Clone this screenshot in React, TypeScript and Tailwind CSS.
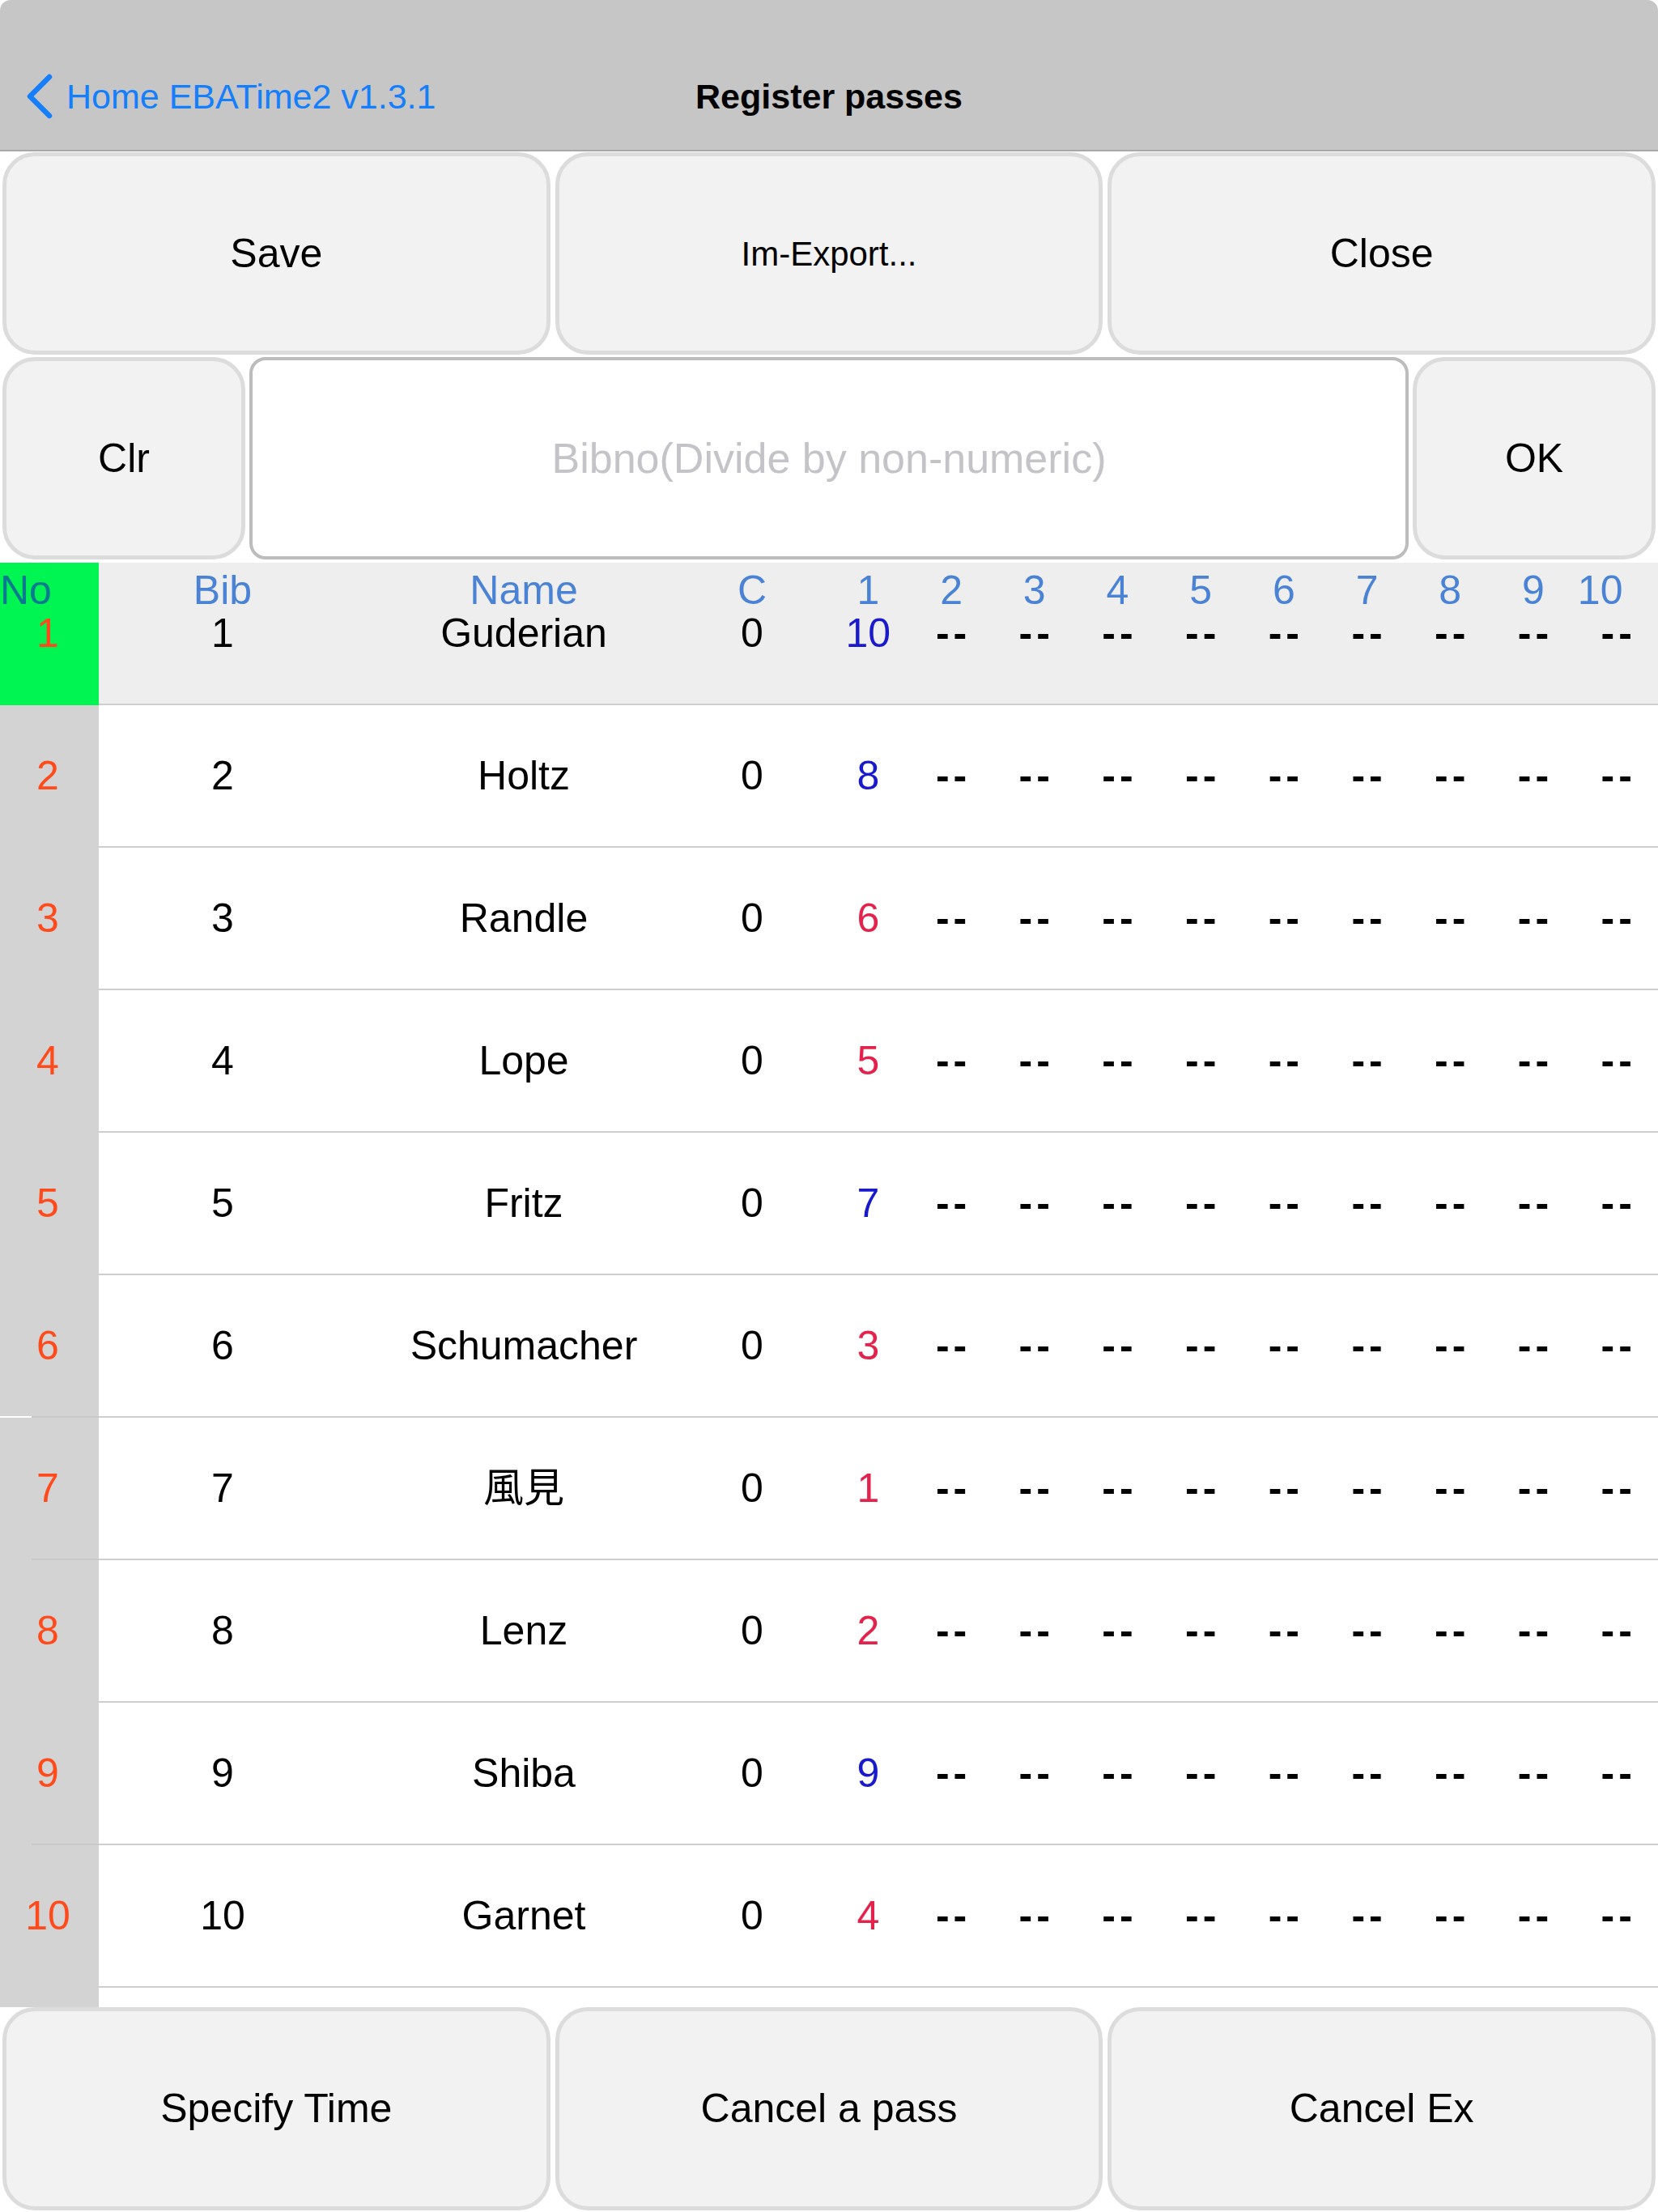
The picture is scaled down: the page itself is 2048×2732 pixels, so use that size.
import React from 'react';

type Sep = 'short' | 'long' | 'cut';
type Entry = { no: number; bib: number; name: string; c: number; pass: number; tone: 'blue' | 'red'; sep?: Sep };

const entries: Entry[] = [
  { no: 1, bib: 1, name: 'Guderian', c: 0, pass: 10, tone: 'blue' },
  { no: 2, bib: 2, name: 'Holtz', c: 0, pass: 8, tone: 'blue' },
  { no: 3, bib: 3, name: 'Randle', c: 0, pass: 6, tone: 'red' },
  { no: 4, bib: 4, name: 'Lope', c: 0, pass: 5, tone: 'red' },
  { no: 5, bib: 5, name: 'Fritz', c: 0, pass: 7, tone: 'blue' },
  { no: 6, bib: 6, name: 'Schumacher', c: 0, pass: 3, tone: 'red', sep: 'cut' },
  { no: 7, bib: 7, name: '風見', c: 0, pass: 1, tone: 'red', sep: 'long' },
  { no: 8, bib: 8, name: 'Lenz', c: 0, pass: 2, tone: 'red' },
  { no: 9, bib: 9, name: 'Shiba', c: 0, pass: 9, tone: 'blue', sep: 'long' },
  { no: 10, bib: 10, name: 'Garnet', c: 0, pass: 4, tone: 'red' },
];

const laps = [2, 3, 4, 5, 6, 7, 8, 9, 10];

const PadButton: React.FC<{ label: string; small?: boolean; className?: string }> = ({ label, small, className = '' }) => (
  <button
    className={`h-full bg-[#f2f2f2] border-[5px] border-[#dcdcdc] rounded-[40px] flex items-center justify-center text-black ${small ? 'text-[42px]' : 'text-[50px]'} ${className}`}
  >
    {label}
  </button>
);

const Row: React.FC<{ entry: Entry }> = ({ entry }) => {
  const selected = entry.no === 1;
  const sep = entry.sep ?? 'short';
  return (
    <div className="flex h-[176px]">
      <div className={`w-[122px] flex flex-col ${selected ? 'bg-[#00f552]' : 'bg-[#d3d3d3]'}`}>
        <div className="flex-1 flex items-center justify-center text-[#ff4a1c] pr-[4px]">{entry.no}</div>
        {sep === 'short' && <div className="h-[2px]" />}
        {sep !== 'short' && (
          <div className="h-[2px] flex">
            <div className={`w-[39px] ${sep === 'cut' ? 'bg-white' : ''}`} />
            <div className="flex-1 bg-[#c8c7cc]" />
          </div>
        )}
      </div>
      <div
        className={`flex-1 grid grid-cols-[306px_438px_155px_repeat(10,1fr)] items-center border-b-2 border-[#cfcfd3] ${selected ? 'bg-[#eeeeee]' : 'bg-white'}`}
      >
        <div className="text-center">{entry.bib}</div>
        <div className="text-center">{entry.name}</div>
        <div className="text-center pr-[29px]">{entry.c}</div>
        <div className={`text-center ${entry.tone === 'blue' ? 'text-[#1a1acd]' : 'text-[#e3234c]'}`}>{entry.pass}</div>
        {laps.map(l => (
          <div key={l} className="text-center font-bold tracking-[5px] pl-[5px]">--</div>
        ))}
      </div>
    </div>
  );
};

export default function App() {
  return (
    <div className="w-[2048px] h-[2732px] bg-white flex flex-col overflow-hidden font-['Liberation_Sans','Noto_Sans_CJK_JP',sans-serif]">
      {/* nav bar */}
      <div className="h-[187px] shrink-0 bg-[#c6c6c6] border-b-2 border-[#a8a8a8] rounded-t-[13px] flex flex-col justify-end pb-[22px]">
        <div className="h-[88px] grid grid-cols-[1fr_auto_1fr] items-center">
          <div className="flex items-center pl-[31px] gap-[16px] text-[#147efb] text-[43px]">
            <svg width="35" height="56" viewBox="0 0 35 56" fill="none">
              <path d="M30 4 L6 28 L30 52" stroke="#147efb" strokeWidth="6.5" strokeLinecap="round" strokeLinejoin="round" />
            </svg>
            <span>Home EBATime2 v1.3.1</span>
          </div>
          <div className="text-[43px] font-bold text-black">Register passes</div>
          <div />
        </div>
      </div>

      {/* top controls */}
      <div className="shrink-0 h-[250px] mt-[1px] px-[3px] flex gap-[6px]">
        <PadButton label="Save" className="flex-1" />
        <PadButton label="Im-Export..." small className="flex-1" />
        <PadButton label="Close" className="flex-1" />
      </div>
      <div className="shrink-0 h-[250px] mt-[3px] px-[3px] flex gap-[5px]">
        <PadButton label="Clr" className="w-[300px]" />
        <div className="flex-1 h-full bg-white border-[4px] border-[#bcbcbc] rounded-[20px] flex items-center justify-center text-[52px] text-[#c4c4c8]">
          Bibno(Divide by non-numeric)
        </div>
        <PadButton label="OK" className="w-[300px]" />
      </div>

      {/* table */}
      <div className="relative flex-1 min-h-0 mt-[4px] flex flex-col text-[50px] leading-none text-black">
        {entries.map(e => (
          <Row key={e.no} entry={e} />
        ))}
        <div className="flex-1 flex">
          <div className="w-[122px] bg-[#d3d3d3]" />
        </div>
        <div className="absolute top-0 left-0 right-0 h-[68px] grid grid-cols-[122px_306px_438px_155px_repeat(10,1fr)] items-center text-[#4a83d6]">
          <div className="text-left text-[#0a7a90]">No</div>
          <div className="text-center">Bib</div>
          <div className="text-center">Name</div>
          <div className="text-center pr-[29px]">C</div>
          {[1, 2, 3, 4, 5, 6, 7, 8, 9].map(n => (
            <div key={n} className="text-center">{n}</div>
          ))}
          <div className="text-center pr-[40px]">10</div>
        </div>
      </div>

      {/* bottom controls */}
      <div className="shrink-0 h-[251px] mb-[2px] px-[3px] flex gap-[6px]">
        <PadButton label="Specify Time" className="flex-1" />
        <PadButton label="Cancel a pass" className="flex-1" />
        <PadButton label="Cancel Ex" className="flex-1" />
      </div>
    </div>
  );
}
